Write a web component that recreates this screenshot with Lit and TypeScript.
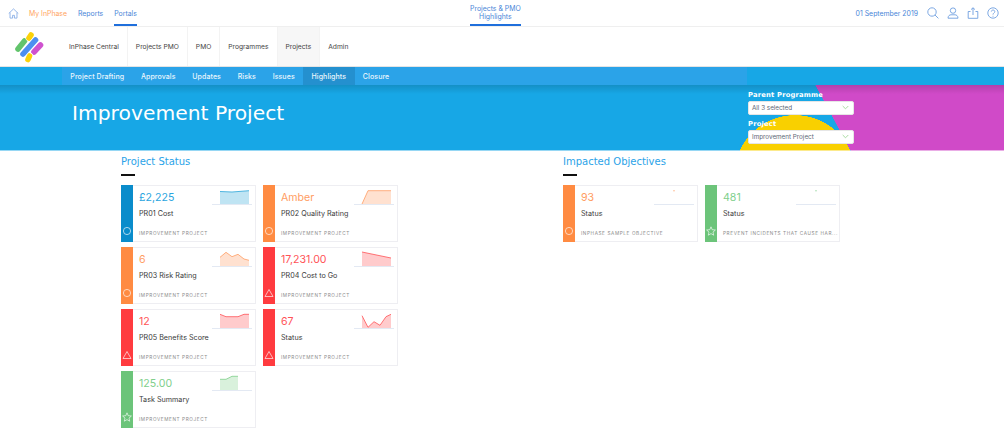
import { LitElement, html, css, svg } from "lit";
import { customElement } from "lit/decorators.js";

type Rag = "blue" | "orange" | "red" | "green";

interface Kpi {
  value: string;
  name: string;
  owner: string;
  rag: Rag;
  points: number[][];
}

const BASE = 16;

const RAG_COLORS: Record<Rag, string> = {
  blue: "#2aa5d8",
  orange: "#ff9d63",
  red: "#ff5357",
  green: "#80cf8c",
};

const statusCards: Kpi[] = [
  { value: "£2,225", name: "PR01 Cost", owner: "IMPROVEMENT PROJECT", rag: "blue", points: [[8, 3.5], [20, 4], [37, 2.7]] },
  { value: "Amber", name: "PR02 Quality Rating", owner: "IMPROVEMENT PROJECT", rag: "orange", points: [[8, 16], [14, 2.7], [37, 2.7]] },
  { value: "6", name: "PR03 Risk Rating", owner: "IMPROVEMENT PROJECT", rag: "orange", points: [[8, 7.3], [14, 2.3], [20, 6.7], [26, 4.3], [32, 9], [37, 10.3]] },
  { value: "17,231.00", name: "PR04 Cost to Go", owner: "IMPROVEMENT PROJECT", rag: "red", points: [[8, 2], [37, 8]] },
  { value: "12", name: "PR05 Benefits Score", owner: "IMPROVEMENT PROJECT", rag: "red", points: [[8, 2.3], [14, 4.7], [26, 4.7], [32, 2.3], [37, 2.3]] },
  { value: "67", name: "Status", owner: "IMPROVEMENT PROJECT", rag: "red", points: [[8, 3.7], [14, 15.3], [20, 9.7], [26, 13.3], [32, 4.7], [37, 2.3]] },
  { value: "125.00", name: "Task Summary", owner: "IMPROVEMENT PROJECT", rag: "green", points: [[8, 5.3], [14, 5.3], [20, 2.3], [26, 2.3]] },
];

const objectiveCards: Kpi[] = [
  { value: "93", name: "Status", owner: "INPHASE SAMPLE OBJECTIVE", rag: "orange", points: [[20, 2.7]] },
  { value: "481", name: "Status", owner: "PREVENT INCIDENTS THAT CAUSE HAR...", rag: "green", points: [[20, 2.7]] },
];

// logo bars, drawn in order so the later ones sit on a white edge
const LOGO_BARS: [string, string][] = [
  ["M18 22 24.5 14", "#62c46c"],
  ["M29 11 31 8", "#fbd20a"],
  ["M34 25 40.5 18", "#cf52cf"],
  ["M28 32.5 29.5 29", "#fbd20a"],
  ["M23 27 35.5 13", "#4d8ff0"],
];

const ragIcon = (rag: Rag) => {
  if (rag === "red") return svg`<path d="M5 1.5 9 8.5H1Z" />`;
  if (rag === "green") return svg`<path d="M5 .8 6.2 3.7 9.4 4 7 6.1 7.7 9.2 5 7.6 2.3 9.2 3 6.1.6 4 3.8 3.7Z" />`;
  return svg`<circle cx="5" cy="5" r="3.6" />`;
};

const spark = (k: Kpi) => {
  const color = RAG_COLORS[k.rag];
  const pts = k.points;
  const line = pts.map((p) => p.join(",")).join(" ");
  const area = pts.length > 1 ? `${pts[0][0]},${BASE} ${line} ${pts[pts.length - 1][0]},${BASE}` : "";
  return html`<svg class="spark" width="40" height="17" viewBox="0 0 40 17">
    <line x1="0" y1="16.5" x2="40" y2="16.5" stroke="#e3e9f3" stroke-width="1" />
    ${pts.length > 1
      ? svg`<polygon points=${area} fill=${color} fill-opacity="0.3" />
            <polyline points=${line} fill="none" stroke=${color} stroke-width="0.8" />`
      : svg`<circle cx=${pts[0][0]} cy=${pts[0][1]} r="0.8" fill=${color} fill-opacity="0.7" />`}
  </svg>`;
};

@customElement("app-root")
export class AppRoot extends LitElement {
  static override styles = css`
    :host {
      display: block;
      width: 1004px;
      height: 438px;
      overflow: hidden;
      background: #fff;
      font-family: Inter, "Liberation Sans", sans-serif;
    }

    /* top strip */
    .top {
      display: flex;
      align-items: stretch;
      height: 27px;
      box-sizing: border-box;
      border-bottom: 1px solid #efefef;
      font-size: 6.9px;
      color: #4a86d8;
    }
    .top-left {
      flex: 0 0 470px;
      display: flex;
      align-items: stretch;
      padding-left: 8px;
      box-sizing: border-box;
    }
    .home {
      width: 11px;
      height: 11px;
      align-self: center;
      margin-right: 10px;
    }
    .top-link {
      display: flex;
      align-items: center;
      margin-right: 11px;
      border-bottom: 2px solid transparent;
      border-top: 2px solid transparent;
    }
    .top-link.me {
      color: #ffa55f;
    }
    .top-link.on {
      border-bottom-color: #1f6fdc;
    }
    .top-mid {
      text-align: center;
      line-height: 8.6px;
      border-bottom: 2px solid #1f6fdc;
      padding-top: 4.5px;
      box-sizing: border-box;
    }
    .top-right {
      margin-left: auto;
      display: flex;
      align-items: center;
      padding-right: 5px;
    }
    .date {
      margin-right: 1px;
    }
    .tool {
      width: 12px;
      height: 12px;
      margin-left: 8px;
      stroke: #6f9fe0;
      fill: none;
      stroke-width: 0.9;
    }

    /* main nav */
    .main {
      display: flex;
      align-items: stretch;
      height: 40px;
      box-sizing: border-box;
      border-bottom: 1px solid #e4e4e4;
    }
    .logo {
      flex: 0 0 61px;
      display: flex;
      align-items: center;
    }
    .main-item {
      display: flex;
      align-items: center;
      padding: 0 8px;
      border-right: 1px solid #f3f3f3;
      font-size: 6.7px;
      color: #444;
    }
    .main-item.on {
      background: #f7f7f7;
    }
    .main-item.last {
      border-right: none;
    }

    /* sub nav */
    .sub {
      height: 18px;
      background: #17a7e6;
      padding-left: 62px;
    }
    .sub-in {
      display: flex;
      width: 685px;
      height: 100%;
      background: #2ba3e8;
    }
    .sub-item {
      display: flex;
      align-items: center;
      padding: 0 8.35px;
      font-size: 7px;
      font-weight: 500;
      color: #eaf6fd;
      letter-spacing: 0.1px;
    }
    .sub-item.on {
      background: #2490cf;
    }

    /* hero */
    .hero {
      display: flex;
      align-items: stretch;
      height: 66px;
      box-sizing: border-box;
      padding-left: 72px;
      border-bottom: 1px solid rgba(255, 255, 255, 0.55);
      background-origin: border-box;
      background-image:
        linear-gradient(rgba(0, 0, 0, 0.14), rgba(0, 0, 0, 0) 9px),
        radial-gradient(circle 61px at 795px 91px, #f9d000 99.5%, transparent 100%),
        linear-gradient(61.7deg, #17a7e6 748.9px, #d04ac8 749.4px);
    }
    .hero h1 {
      flex: 0 0 676px;
      margin: 0;
      padding-top: 15px;
      font: 400 20.3px/26px "DejaVu Sans", sans-serif;
      color: #fff;
    }
    .filters {
      width: 106px;
      padding-top: 5px;
    }
    .filters label {
      display: block;
      font: 700 6.75px/10.5px "DejaVu Sans", sans-serif;
      color: #fff;
      letter-spacing: 0.2px;
    }
    .select {
      display: flex;
      align-items: center;
      justify-content: space-between;
      height: 14px;
      box-sizing: border-box;
      margin-bottom: 4.5px;
      padding: 0 4px 0 3px;
      background: #fff;
      border: 1px solid #e6e6e6;
      border-radius: 2px;
      font-size: 6.3px;
      color: #5d6675;
    }
    .select svg {
      width: 7px;
      height: 5px;
    }

    /* content */
    .content {
      display: flex;
      padding-left: 121px;
    }
    .panel {
      flex: 0 0 442px;
    }
    .panel h2 {
      margin: 0;
      padding-top: 4px;
      font: 400 10px/14px "DejaVu Sans", sans-serif;
      color: #2ba3e8;
    }
    .rule {
      width: 14px;
      height: 2px;
      margin: 5px 0 9px;
      background: #111;
    }
    .grid {
      display: grid;
      grid-template-columns: 135px 135px;
      column-gap: 7px;
      row-gap: 5px;
    }
    .card {
      display: flex;
      height: 57px;
      box-sizing: border-box;
      border: 1px solid #eeeef2;
      background: #fff;
    }
    .strip {
      flex: 0 0 12px;
      margin: -1px 0 -1px -1px;
      display: flex;
      align-items: flex-end;
      justify-content: center;
      padding-bottom: 6px;
      box-sizing: border-box;
    }
    .strip svg {
      width: 10px;
      height: 10px;
      fill: none;
      stroke: rgba(255, 255, 255, 0.8);
      stroke-width: 0.8;
    }
    .strip.blue { background: #0a8ccb; }
    .strip.orange { background: #ff8b42; }
    .strip.red { background: #ff3b3f; }
    .strip.green { background: #6cc47a; }
    .body {
      flex: 1;
      min-width: 0;
      display: flex;
      flex-direction: column;
      padding-left: 6px;
    }
    .head {
      display: flex;
      justify-content: space-between;
      height: 23px;
    }
    .value {
      font-size: 10.6px;
      line-height: 14px;
      padding-top: 5px;
    }
    .value.blue { color: #2aa5e0; }
    .value.orange { color: #ff9d63; }
    .value.red { color: #ff5357; }
    .value.green { color: #80cf8c; }
    .spark {
      margin: 2px 3px 0 0;
      flex: none;
    }
    .name {
      font-size: 7.2px;
      line-height: 10px;
      color: #3a3a3a;
    }
    .owner {
      margin-top: auto;
      padding-bottom: 4px;
      font-size: 4.7px;
      line-height: 7px;
      letter-spacing: 0.6px;
      color: #8b8b8b;
      white-space: nowrap;
    }
  `;

  private card(k: Kpi) {
    return html`<div class="card">
      <div class="strip ${k.rag}">
        <svg viewBox="0 0 10 10">${ragIcon(k.rag)}</svg>
      </div>
      <div class="body">
        <div class="head">
          <span class="value ${k.rag}">${k.value}</span>
          ${spark(k)}
        </div>
        <div class="name">${k.name}</div>
        <div class="owner">${k.owner}</div>
      </div>
    </div>`;
  }

  private chevron() {
    return html`<svg viewBox="0 0 7 5">
      <path d="M.7 1 3.5 3.8 6.3 1" fill="none" stroke="#9fd897" stroke-width="0.9" />
    </svg>`;
  }

  override render() {
    return html`
      <div class="top">
        <div class="top-left">
          <svg class="home" viewBox="0 0 12 12" fill="none" stroke="#7fa8e4" stroke-width="0.9">
            <path d="M.8 6 6 1l5.2 5M2.2 5v6h2.8V8h2v3h2.8V5" />
          </svg>
          <span class="top-link me">My InPhase</span>
          <span class="top-link">Reports</span>
          <span class="top-link on">Portals</span>
        </div>
        <div class="top-mid">Projects &amp; PMO<br />Highlights</div>
        <div class="top-right">
          <span class="date">01 September 2019</span>
          <svg class="tool" viewBox="0 0 12 12"><circle cx="5" cy="5" r="4.2" /><path d="m8 8 3.4 3.4" /></svg>
          <svg class="tool" viewBox="0 0 12 12"><circle cx="6" cy="3.6" r="2.7" /><path d="M1 11.2c0-2.4 1.6-3.4 3-3.4h4c1.4 0 3 1 3 3.4Z" /></svg>
          <svg class="tool" viewBox="0 0 12 12"><path d="M3.5 4.5H1.2v6.8h9.6V4.5H8.5M6 8V.8M4 2.6 6 .8l2 1.8" /></svg>
          <svg class="tool" viewBox="0 0 12 12"><circle cx="6" cy="6" r="5.2" /><path d="M4.3 4.6C4.4 2.5 7.8 2.6 7.8 4.6 7.8 6 6 6 6 7.6M6 8.8v.9" /></svg>
        </div>
      </div>

      <div class="main">
        <div class="logo">
          <svg width="61" height="39" viewBox="0 0 61 39" fill="none" stroke-linecap="round">
            ${LOGO_BARS.map(
              ([d, color]) => svg`<path d=${d} stroke="#fff" stroke-width="6.8" /><path d=${d} stroke=${color} stroke-width="5.6" />`
            )}
          </svg>
        </div>
        <div class="main-item">InPhase Central</div>
        <div class="main-item">Projects PMO</div>
        <div class="main-item">PMO</div>
        <div class="main-item">Programmes</div>
        <div class="main-item on">Projects</div>
        <div class="main-item last">Admin</div>
      </div>

      <div class="sub">
        <div class="sub-in">
          ${["Project Drafting", "Approvals", "Updates", "Risks", "Issues", "Highlights", "Closure"].map(
            (t) => html`<div class="sub-item ${t === "Highlights" ? "on" : ""}">${t}</div>`
          )}
        </div>
      </div>

      <div class="hero">
        <h1>Improvement Project</h1>
        <div class="filters">
          <label>Parent Programme</label>
          <div class="select">All 3 selected ${this.chevron()}</div>
          <label>Project</label>
          <div class="select">Improvement Project ${this.chevron()}</div>
        </div>
      </div>

      <div class="content">
        <section class="panel">
          <h2>Project Status</h2>
          <div class="rule"></div>
          <div class="grid">${statusCards.map((k) => this.card(k))}</div>
        </section>
        <section class="panel">
          <h2>Impacted Objectives</h2>
          <div class="rule"></div>
          <div class="grid">${objectiveCards.map((k) => this.card(k))}</div>
        </section>
      </div>
    `;
  }
}

declare global {
  interface HTMLElementTagNameMap {
    "app-root": AppRoot;
  }
}
